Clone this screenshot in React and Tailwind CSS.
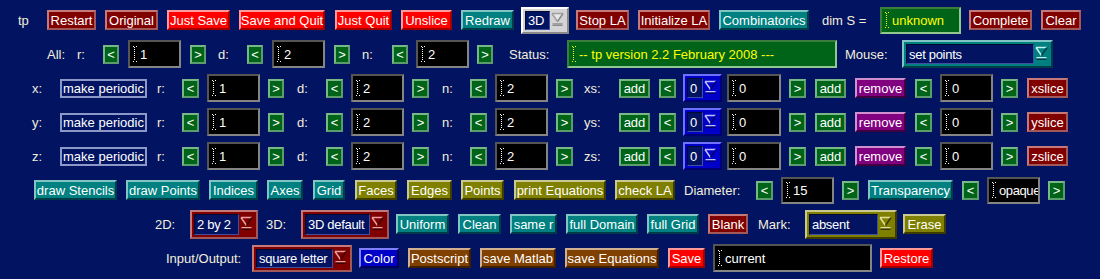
import React from "react";

// bevel colours per button tone (fill, light edge top/left, dark edge bottom/right)
const TONE = {
  maroon: "bg-[#800000] border-t-[#c47a7a] border-l-[#c47a7a] border-b-[#a05858] border-r-[#a05858]",
  red: "bg-[#ff0000] border-t-[#ff9a9a] border-l-[#ff9a9a] border-b-[#a00000] border-r-[#a00000]",
  teal: "bg-[#008080] border-t-[#80c4c4] border-l-[#80c4c4] border-b-[#003c48] border-r-[#003c48]",
  olive: "bg-[#808000] border-t-[#c8c890] border-l-[#c8c890] border-b-[#3c3c00] border-r-[#3c3c00]",
  green: "bg-[#006418] border-t-[#78b888] border-l-[#78b888] border-b-[#5c9c6c] border-r-[#5c9c6c]",
  purple: "bg-[#800080] border-t-[#d090d0] border-l-[#d090d0] border-b-[#400040] border-r-[#400040]",
  blue: "bg-[#0000c8] border-t-[#8080ff] border-l-[#8080ff] border-b-[#000060] border-r-[#000060]",
  brown: "bg-[#804000] border-t-[#d0b090] border-l-[#d0b090] border-b-[#402000] border-r-[#402000]",
  navy: "bg-[#021461] border-[#8c98c8]",
};

function Btn({ tone, className = "", h = "h-[20px]", children }) {
  return (
    <div
      className={`shrink-0 flex items-center justify-center border-2 text-white whitespace-nowrap text-[13px] leading-none ${TONE[tone]} ${h} ${className}`}
    >
      {children}
    </div>
  );
}

function Arrow({ dir, className = "" }) {
  return (
    <Btn tone="green" h="h-[19px]" className={`text-[10px] ${className}`}>
      {dir}
    </Btn>
  );
}

function Label({ className = "", children }) {
  return <span className={`shrink-0 whitespace-nowrap text-[13px] leading-none text-[#f4eedc] ${className}`}>{children}</span>;
}

function Cursor({ color }) {
  return (
    <svg width="4" height="16" viewBox="0 0 4 16" className="shrink-0">
      <path d="M0 0.5h1M3 0.5h1M0 15.5h1M3 15.5h1" stroke={color} />
      <line x1="1.5" y1="1" x2="1.5" y2="15" stroke={color} strokeDasharray="1 1" />
    </svg>
  );
}

function Field({ value, yellow = false, className = "", h = "h-[28px]" }) {
  const box = yellow
    ? "bg-[#006418] border-t-[#3c7c3c] border-l-[#3c7c3c] border-b-[#90c890] border-r-[#90c890] text-[#ffff00]"
    : "bg-black border-t-[#555555] border-l-[#555555] border-b-[#858585] border-r-[#858585] text-white";
  return (
    <div className={`shrink-0 flex items-center border-2 pl-[3px] overflow-hidden whitespace-nowrap text-[13px] leading-none ${box} ${h} ${className}`}>
      <Cursor color={yellow ? "#ffff00" : "#ffffff"} />
      <span className="ml-[3px]">{value}</span>
    </div>
  );
}

function Tri({ fill, light, dark }) {
  return (
    <svg width="13" height="16" viewBox="0 0 13 16" className="shrink-0">
      <polygon points="1.5,2 11.5,2 6.5,9" fill={fill} />
      <path d="M1 1.5H12M1 1.5L6.5 9.5" stroke={light} strokeWidth="1.5" fill="none" />
      <path d="M12 1.5L6.5 9.5" stroke={dark} strokeWidth="1.5" fill="none" />
      <rect x="1.5" y="11" width="10" height="1.5" fill={light} />
      <rect x="1.5" y="12.5" width="10" height="1.5" fill={dark} />
    </svg>
  );
}

const CHOICE = {
  gray: { frame: "bg-[#d4d4d4] border-t-white border-l-white border-b-[#8a8a8a] border-r-[#8a8a8a]", tri: ["#e8e8e8", "#a0a0a0", "#8a8a8a"] },
  blue: { frame: "bg-[#0000c8] border-t-[#7070ff] border-l-[#7070ff] border-b-[#000070] border-r-[#000070]", tri: ["#0000c8", "#c0c0ff", "#000070"] },
  teal: { frame: "bg-[#008080] border-t-[#80c4c4] border-l-[#80c4c4] border-b-[#003c48] border-r-[#003c48]", tri: ["#008080", "#c0f0f0", "#003c48"] },
  maroon: { frame: "bg-[#800000] border-t-[#c47a7a] border-l-[#c47a7a] border-b-[#a05858] border-r-[#a05858]", tri: ["#800000", "#e8a0a0", "#400000"] },
  olive: { frame: "bg-[#808000] border-t-[#c8c890] border-l-[#c8c890] border-b-[#3c3c00] border-r-[#3c3c00]", tri: ["#808000", "#e0e0a0", "#3c3c00"] },
};

function Choice({ tone, value, className = "", h = "h-[28px]" }) {
  const c = CHOICE[tone];
  return (
    <div className={`shrink-0 flex items-center border-2 p-[2px] ${c.frame} ${h} ${className}`}>
      <div className="flex-1 min-w-0 h-full flex items-center bg-[#021461] border border-t-[#000a30] border-l-[#000a30] border-b-[#4050a0] border-r-[#4050a0] pl-[2px] text-white text-[13px] tracking-[-0.3px] leading-none whitespace-nowrap overflow-hidden">
        {value}
      </div>
      <div className="w-[15px] shrink-0 flex items-center justify-center">
        <Tri fill={c.tri[0]} light={c.tri[1]} dark={c.tri[2]} />
      </div>
    </div>
  );
}

function AxisRow({ axis }) {
  return (
    <div className="flex items-center h-[34px]">
      <Label className="ml-[32px] w-[28px]">{axis}:</Label>
      <Btn tone="navy" h="h-[19px]" className="w-[87px]">make periodic</Btn>
      <Label className="ml-[10px] w-[25px]">r:</Label>
      <Arrow dir="<" className="w-[17px]" />
      <Field value="1" className="ml-[8px] w-[53px]" />
      <Arrow dir=">" className="ml-[8px] w-[16px]" />
      <Label className="ml-[13px] w-[29px]">d:</Label>
      <Arrow dir="<" className="w-[17px]" />
      <Field value="2" className="ml-[8px] w-[53px]" />
      <Arrow dir=">" className="ml-[8px] w-[17px]" />
      <Label className="ml-[13px] w-[28px]">n:</Label>
      <Arrow dir="<" className="w-[17px]" />
      <Field value="2" className="ml-[8px] w-[53px]" />
      <Arrow dir=">" className="ml-[8px] w-[17px]" />
      <Label className="ml-[11px] w-[35px]">{axis}s:</Label>
      <Btn tone="green" h="h-[19px]" className="w-[31px]">add</Btn>
      <Arrow dir="<" className="ml-[9px] w-[17px]" />
      <Choice tone="blue" value="0" className="ml-[7px] w-[39px]" />
      <Field value="0" className="ml-[5px] w-[54px]" />
      <Arrow dir=">" className="ml-[8px] w-[17px]" />
      <Btn tone="green" h="h-[19px]" className="ml-[9px] w-[31px]">add</Btn>
      <Btn tone="purple" className="ml-[9px] w-[51px]">remove</Btn>
      <Arrow dir="<" className="ml-[9px] w-[17px]" />
      <Field value="0" className="ml-[8px] w-[53px]" />
      <Arrow dir=">" className="ml-[8px] w-[17px]" />
      <Btn tone="maroon" className="ml-[9px] w-[41px]">{axis}slice</Btn>
    </div>
  );
}

export default function App() {
  return (
    <div className="w-[1100px] h-[279px] overflow-hidden bg-[#021461] pt-[3px] font-['Liberation_Sans',Arial,sans-serif]">
      {/* top command bar */}
      <div className="flex items-center h-[34px]">
        <Label className="ml-[18px] w-[29px]">tp</Label>
        <Btn tone="maroon" className="w-[49px]">Restart</Btn>
        <Btn tone="maroon" className="ml-[9px] w-[53px]">Original</Btn>
        <Btn tone="red" className="ml-[9px] w-[63px]">Just Save</Btn>
        <Btn tone="red" className="ml-[9px] w-[86px]">Save and Quit</Btn>
        <Btn tone="red" className="ml-[10px] w-[57px]">Just Quit</Btn>
        <Btn tone="red" className="ml-[9px] w-[51px]">Unslice</Btn>
        <Btn tone="teal" className="ml-[9px] w-[53px]">Redraw</Btn>
        <Choice tone="gray" value="3D" h="h-[27px]" className="ml-[7px] w-[48px]" />
        <Btn tone="maroon" className="ml-[7px] w-[53px]">Stop LA</Btn>
        <Btn tone="maroon" className="ml-[9px] w-[72px]">Initialize LA</Btn>
        <Btn tone="teal" className="ml-[9px] w-[90px]">Combinatorics</Btn>
        <Label className="ml-[13px] w-[58px]">dim S =</Label>
        <Field value="unknown" yellow h="h-[27px]" className="w-[81px]" />
        <Btn tone="maroon" className="ml-[8px] w-[63px]">Complete</Btn>
        <Btn tone="maroon" className="ml-[9px] w-[40px]">Clear</Btn>
      </div>

      {/* all axes */}
      <div className="flex items-center h-[34px]">
        <Label className="ml-[47px] w-[30px]">All:</Label>
        <Label className="w-[26px]">r:</Label>
        <Arrow dir="<" className="w-[16px]" />
        <Field value="1" className="ml-[9px] w-[53px]" />
        <Arrow dir=">" className="ml-[9px] w-[16px]" />
        <Label className="ml-[12px] w-[29px]">d:</Label>
        <Arrow dir="<" className="w-[16px]" />
        <Field value="2" className="ml-[9px] w-[53px]" />
        <Arrow dir=">" className="ml-[9px] w-[16px]" />
        <Label className="ml-[12px] w-[30px]">n:</Label>
        <Arrow dir="<" className="w-[16px]" />
        <Field value="2" className="ml-[8px] w-[53px]" />
        <Arrow dir=">" className="ml-[8px] w-[16px]" />
        <Label className="ml-[16px] w-[58px]">Status:</Label>
        <Field value="-- tp version 2.2 February 2008 ---" yellow className="w-[270px]" />
        <Label className="ml-[8px] w-[57px]">Mouse:</Label>
        <Choice tone="teal" value="set points" className="w-[151px]" />
      </div>

      <AxisRow axis="x" />
      <AxisRow axis="y" />
      <AxisRow axis="z" />

      {/* drawing toggles */}
      <div className="flex items-center h-[34px]">
        <Btn tone="teal" className="ml-[34px] w-[83px]">draw Stencils</Btn>
        <Btn tone="teal" className="ml-[9px] w-[74px]">draw Points</Btn>
        <Btn tone="teal" className="ml-[9px] w-[49px]">Indices</Btn>
        <Btn tone="teal" className="ml-[9px] w-[36px]">Axes</Btn>
        <Btn tone="teal" className="ml-[10px] w-[32px]">Grid</Btn>
        <Btn tone="olive" className="ml-[10px] w-[42px]">Faces</Btn>
        <Btn tone="olive" className="ml-[10px] w-[45px]">Edges</Btn>
        <Btn tone="olive" className="ml-[9px] w-[43px]">Points</Btn>
        <Btn tone="olive" className="ml-[10px] w-[92px]">print Equations</Btn>
        <Btn tone="olive" className="ml-[9px] w-[60px]">check LA</Btn>
        <Label className="ml-[9px] w-[72px]">Diameter:</Label>
        <Arrow dir="<" className="w-[17px]" />
        <Field value="15" h="h-[27px]" className="ml-[8px] w-[53px]" />
        <Arrow dir=">" className="ml-[8px] w-[17px]" />
        <Btn tone="teal" className="ml-[9px] w-[85px]">Transparency</Btn>
        <Arrow dir="<" className="ml-[9px] w-[17px]" />
        <Field value="opaque" h="h-[27px]" className="ml-[8px] w-[53px] tracking-[-0.4px]" />
        <Arrow dir=">" className="ml-[8px] w-[17px]" />
      </div>

      {/* views */}
      <div className="flex items-center h-[34px]">
        <Label className="ml-[155px] w-[35px]">2D:</Label>
        <Choice tone="maroon" value="2 by 2" h="h-[29px]" className="w-[68px]" />
        <Label className="ml-[8px] w-[35px]">3D:</Label>
        <Choice tone="maroon" value="3D default" h="h-[29px]" className="w-[88px]" />
        <Btn tone="teal" className="ml-[7px] w-[53px]">Uniform</Btn>
        <Btn tone="teal" className="ml-[9px] w-[43px]">Clean</Btn>
        <Btn tone="teal" className="ml-[9px] w-[47px]">same r</Btn>
        <Btn tone="teal" className="ml-[9px] w-[72px]">full Domain</Btn>
        <Btn tone="teal" className="ml-[9px] w-[52px]">full Grid</Btn>
        <Btn tone="maroon" className="ml-[9px] w-[40px]">Blank</Btn>
        <Label className="ml-[10px] w-[47px]">Mark:</Label>
        <Choice tone="olive" value="absent" h="h-[29px]" className="w-[92px]" />
        <Btn tone="olive" className="ml-[6px] w-[43px]">Erase</Btn>
      </div>

      {/* input / output */}
      <div className="flex items-center h-[34px]">
        <Label className="ml-[166px] w-[86px]">Input/Output:</Label>
        <Choice tone="maroon" value="square letter" h="h-[27px]" className="w-[100px]" />
        <Btn tone="blue" className="ml-[7px] w-[40px]">Color</Btn>
        <Btn tone="brown" className="ml-[9px] w-[63px]">Postscript</Btn>
        <Btn tone="brown" className="ml-[9px] w-[76px]">save Matlab</Btn>
        <Btn tone="brown" className="ml-[9px] w-[94px]">save Equations</Btn>
        <Btn tone="red" className="ml-[9px] w-[37px]">Save</Btn>
        <Field value="current" className="ml-[8px] w-[159px]" />
        <Btn tone="red" className="ml-[8px] w-[53px]">Restore</Btn>
      </div>
    </div>
  );
}
